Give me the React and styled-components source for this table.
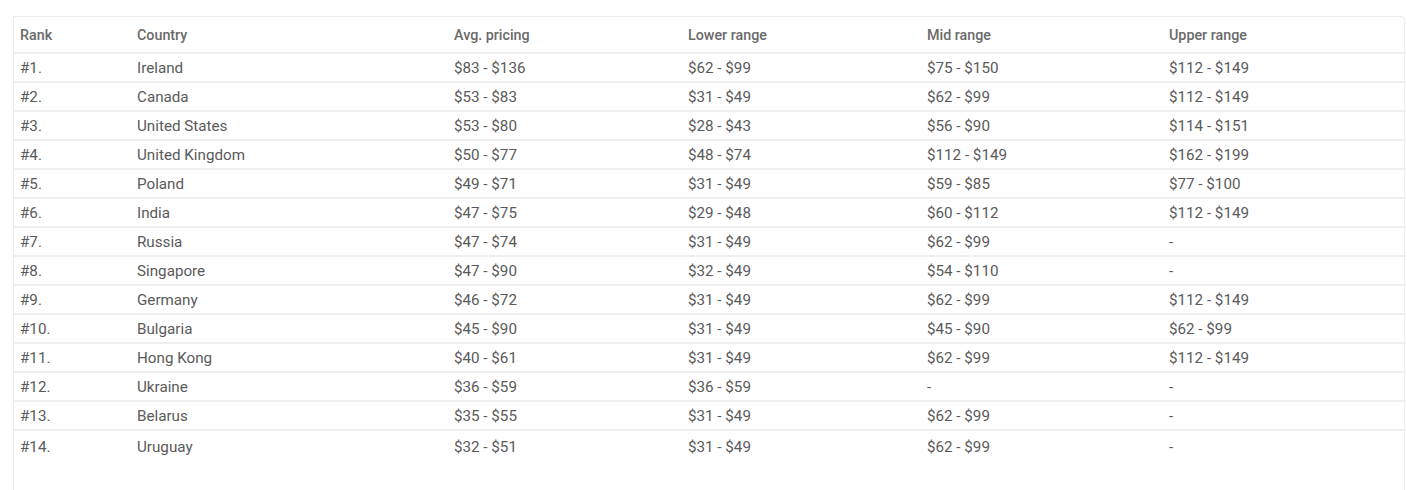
import React from 'react';
import styled, { createGlobalStyle } from 'styled-components';

const GlobalStyle = createGlobalStyle`
  html, body {
    margin: 0;
    padding: 0;
    background: #fff;
  }
  body {
    font-family: Roboto, "Liberation Sans", Arial, sans-serif;
    overflow: hidden;
  }
`;

const Page = styled.div`
  padding: 16px 2px 0 13px;
`;

const Card = styled.div`
  border: 1px solid #ececec;
  border-radius: 0 4px 0 0;
  min-height: 520px;
  box-sizing: border-box;
`;

const Table = styled.table`
  width: 100%;
  border-collapse: collapse;
  table-layout: fixed;
`;

const HeadCell = styled.th`
  text-align: left;
  font-weight: 500;
  font-size: 14.3px;
  color: #6a6a6a;
  height: 36px;
  padding: 0 0 0 6px;
  border-bottom: 2px solid #efefef;
  box-sizing: border-box;
`;

const Row = styled.tr`
  border-bottom: ${(p) => (p.$last ? 'none' : '2px solid #efefef')};
`;

const Cell = styled.td`
  font-size: 15.2px;
  color: #5a5a5a;
  height: ${(p) => (p.$tall ? '31px' : '27px')};
  padding: 0 0 0 6px;
  white-space: nowrap;
`;

const columns = [
  { label: 'Rank', width: 117 },
  { label: 'Country', width: 317 },
  { label: 'Avg. pricing', width: 234 },
  { label: 'Lower range', width: 239 },
  { label: 'Mid range', width: 242 },
  { label: 'Upper range', width: 243 },
];

const rows = [
  ['Ireland', '$83 - $136', '$62 - $99', '$75 - $150', '$112 - $149'],
  ['Canada', '$53 - $83', '$31 - $49', '$62 - $99', '$112 - $149'],
  ['United States', '$53 - $80', '$28 - $43', '$56 - $90', '$114 - $151'],
  ['United Kingdom', '$50 - $77', '$48 - $74', '$112 - $149', '$162 - $199'],
  ['Poland', '$49 - $71', '$31 - $49', '$59 - $85', '$77 - $100'],
  ['India', '$47 - $75', '$29 - $48', '$60 - $112', '$112 - $149'],
  ['Russia', '$47 - $74', '$31 - $49', '$62 - $99', '-'],
  ['Singapore', '$47 - $90', '$32 - $49', '$54 - $110', '-'],
  ['Germany', '$46 - $72', '$31 - $49', '$62 - $99', '$112 - $149'],
  ['Bulgaria', '$45 - $90', '$31 - $49', '$45 - $90', '$62 - $99'],
  ['Hong Kong', '$40 - $61', '$31 - $49', '$62 - $99', '$112 - $149'],
  ['Ukraine', '$36 - $59', '$36 - $59', '-', '-'],
  ['Belarus', '$35 - $55', '$31 - $49', '$62 - $99', '-'],
  ['Uruguay', '$32 - $51', '$31 - $49', '$62 - $99', '-'],
];

export default function App() {
  return (
    <Page>
      <GlobalStyle />
      <Card>
        <Table>
          <colgroup>
            {columns.map((c) => (
              <col key={c.label} style={{ width: c.width }} />
            ))}
          </colgroup>
          <thead>
            <tr>
              {columns.map((c) => (
                <HeadCell key={c.label}>{c.label}</HeadCell>
              ))}
            </tr>
          </thead>
          <tbody>
            {rows.map((r, i) => {
              const last = i === rows.length - 1;
              return (
                <Row key={r[0]} $last={last}>
                  <Cell $tall={last}>#{i + 1}.</Cell>
                  {r.map((v, j) => (
                    <Cell key={j} $tall={last}>{v}</Cell>
                  ))}
                </Row>
              );
            })}
          </tbody>
        </Table>
      </Card>
    </Page>
  );
}
